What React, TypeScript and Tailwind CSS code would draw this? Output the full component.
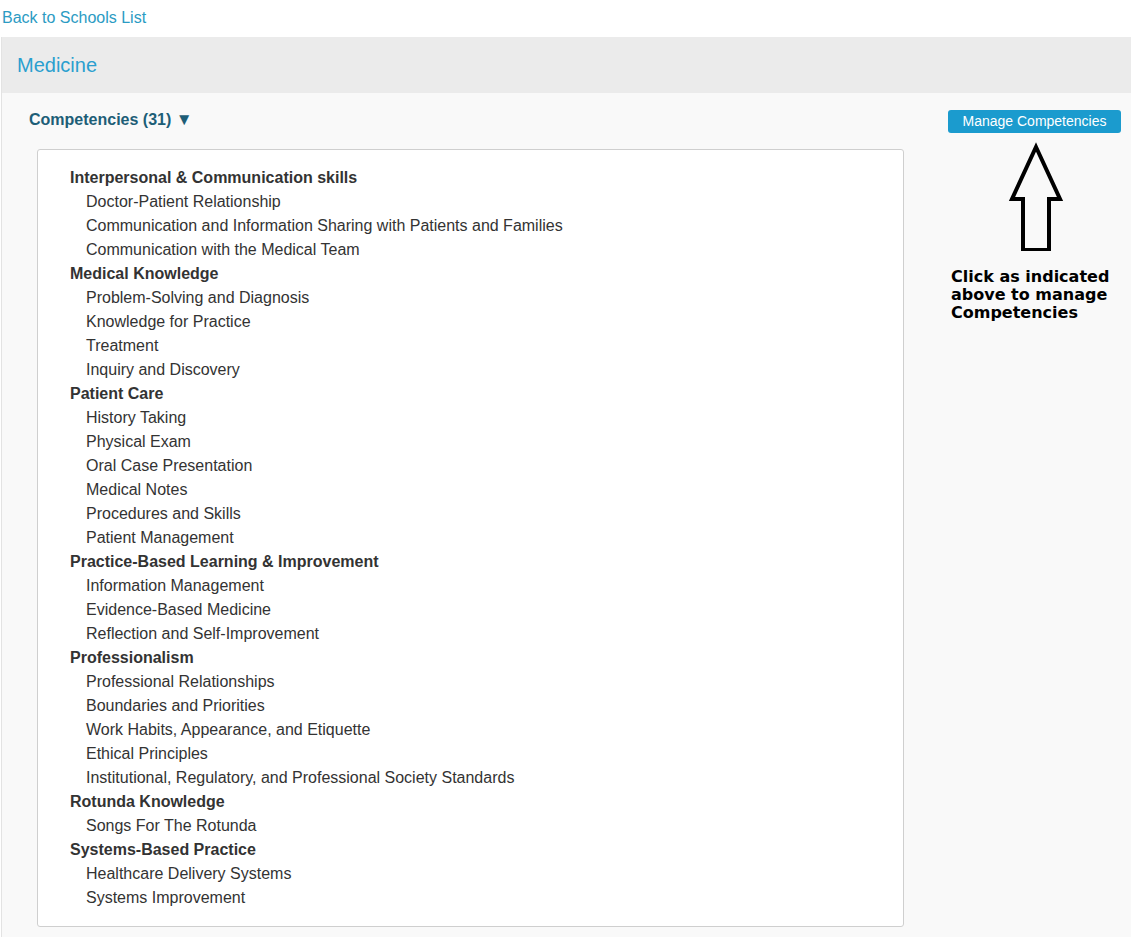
import React from "react";

const groups: { title: string; items: string[] }[] = [
  {
    title: "Interpersonal & Communication skills",
    items: [
      "Doctor-Patient Relationship",
      "Communication and Information Sharing with Patients and Families",
      "Communication with the Medical Team",
    ],
  },
  {
    title: "Medical Knowledge",
    items: ["Problem-Solving and Diagnosis", "Knowledge for Practice", "Treatment", "Inquiry and Discovery"],
  },
  {
    title: "Patient Care",
    items: [
      "History Taking",
      "Physical Exam",
      "Oral Case Presentation",
      "Medical Notes",
      "Procedures and Skills",
      "Patient Management",
    ],
  },
  {
    title: "Practice-Based Learning & Improvement",
    items: ["Information Management", "Evidence-Based Medicine", "Reflection and Self-Improvement"],
  },
  {
    title: "Professionalism",
    items: [
      "Professional Relationships",
      "Boundaries and Priorities",
      "Work Habits, Appearance, and Etiquette",
      "Ethical Principles",
      "Institutional, Regulatory, and Professional Society Standards",
    ],
  },
  { title: "Rotunda Knowledge", items: ["Songs For The Rotunda"] },
  { title: "Systems-Based Practice", items: ["Healthcare Delivery Systems", "Systems Improvement"] },
];

export default function App() {
  return (
    <div className="min-h-[937px] bg-white font-['Liberation_Sans',Arial,sans-serif] text-[#333]">
      <div className="h-[37px] flex items-center pl-[2px] pb-[1px]">
        <a className="text-[16px] leading-[20px] text-[#2b9bc3]">Back to Schools List</a>
      </div>
      <div className="ml-[1px] border-l border-[#e3e3e3] bg-[#f9f9f9] min-h-[900px]">
        <div className="h-[56px] bg-[#ebebeb] flex items-center pl-[15px]">
          <h2 className="text-[20px] leading-[24px] text-[#2a9fcf]">Medicine</h2>
        </div>
        <div className="flex">
          <div className="flex-1 pr-[44px] pb-[11px]">
            <div className="pt-[15px] pl-[27px] text-[16px] leading-[24px] font-bold text-[#1d5e77]">
              Competencies (31) <span className="text-[17px]">▼</span>
            </div>
            <div className="mt-[17px] ml-[35px] bg-white border border-[#cfcfcf] rounded-[3px] pt-[16px] pb-[16px] pl-[32px]">
              {groups.map((g) => (
                <div key={g.title}>
                  <div className="text-[16px] leading-[24px] font-bold text-[#333]">{g.title}</div>
                  {g.items.map((it) => (
                    <div key={it} className="pl-[16px] text-[16px] leading-[24px] text-[#333]">
                      {it}
                    </div>
                  ))}
                </div>
              ))}
            </div>
          </div>
          <div className="w-[173px] mr-[10px] pt-[17px] flex flex-col">
            <button className="h-[23px] w-[173px] rounded-[3px] bg-[#1b9bce] text-white text-[14px] leading-[23px]">
              Manage Competencies
            </button>
            <svg width="173" height="118" viewBox="0 0 173 118">
              <path
                d="M88 16 L112 68 L101 68 L101 119 L75 119 L75 68 L64 68 Z"
                fill="none"
                stroke="#000"
                strokeWidth="4"
                strokeLinejoin="miter"
                transform="translate(0,-2)"
              />
            </svg>
            <div className="pl-[3px] mt-[17px] font-['DejaVu_Sans',sans-serif] font-bold text-[16px] leading-[18px] text-black">
              Click as indicated
              <br />
              above to manage
              <br />
              Competencies
            </div>
          </div>
        </div>
      </div>
    </div>
  );
}
